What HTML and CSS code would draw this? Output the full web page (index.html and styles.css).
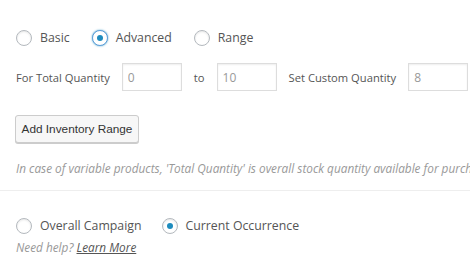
FILE: index.html
```html
<!DOCTYPE html>
<html lang="en">
<head>
<meta charset="UTF-8">
<meta name="viewport" content="width=device-width, initial-scale=1.0">
<title>Inventory Settings</title>
<link rel="stylesheet" href="styles.css">
</head>
<body>
<div class="panel">
  <div class="choices">
    <label class="choice"><span class="radio"></span> Basic</label>
    <label class="choice"><span class="radio checked focus"></span> Advanced</label>
    <label class="choice"><span class="radio"></span> Range</label>
  </div>
  <div class="range">
    <span class="field-label">For Total Quantity</span>
    <input type="text" class="qty" value="0">
    <span class="field-label">to</span>
    <input type="text" class="qty" value="10">
    <span class="field-label">Set Custom Quantity</span>
    <input type="text" class="qty" value="8">
  </div>
  <button class="button">Add Inventory Range</button>
  <p class="description">In case of variable products, 'Total Quantity' is overall stock quantity available for purchase.</p>
</div>
<div class="divider"></div>
<div class="panel">
  <div class="choices lower">
    <label class="choice"><span class="radio"></span> Overall Campaign</label>
    <label class="choice"><span class="radio checked"></span> Current Occurrence</label>
  </div>
  <p class="help">Need help? <a href="#">Learn More</a></p>
</div>
</body>
</html>
```

FILE: styles.css
```css
body {
  margin: 0;
  font-family: 'Open Sans', sans-serif;
  font-size: 12.3px;
  color: #555;
  background: #fff;
  overflow: hidden;
}

.panel {
  padding: 0 0 0 16px;
}

.choices {
  display: flex;
  align-items: center;
  height: 16px;
  margin-top: 30px;
  gap: 22px;
}

.choices.lower {
  margin-top: 27px;
  gap: 20px;
}

.choice {
  display: flex;
  align-items: center;
  gap: 8px;
  line-height: 16px;
  white-space: nowrap;
}

.radio {
  box-sizing: border-box;
  width: 16px;
  height: 16px;
  border: 1px solid #b4b9be;
  border-radius: 50%;
  background: #fff;
  box-shadow: inset 0 1px 2px rgba(0, 0, 0, 0.1);
  display: flex;
  align-items: center;
  justify-content: center;
}

.radio.checked::before {
  content: "";
  width: 6px;
  height: 6px;
  border-radius: 50%;
  background: #1e8cbe;
}

.radio.focus {
  border-color: #5b9dd9;
  box-shadow: 0 0 2px rgba(30, 140, 190, 0.8);
}

.range {
  display: flex;
  align-items: center;
  gap: 12px;
  margin-top: 17px;
  height: 28px;
}

.field-label {
  white-space: nowrap;
  flex-shrink: 0;
  font-size: 11.2px;
}

.qty {
  box-sizing: border-box;
  flex-shrink: 0;
  width: 60px;
  height: 28px;
  border: 1px solid #ddd;
  box-shadow: inset 0 1px 2px rgba(0, 0, 0, 0.07);
  padding: 0 5px;
  font-family: 'Open Sans', sans-serif;
  font-size: 12px;
  color: #999;
}

.button {
  display: block;
  margin: 24px 0 0 -1px;
  height: 28px;
  width: 124px;
  padding: 0;
  white-space: nowrap;
  font-family: 'Liberation Sans', Arial, sans-serif;
  font-size: 11.8px;
  color: #333;
  background: #f7f7f7;
  border: 1px solid #ccc;
  border-radius: 3px;
  box-shadow: 0 1px 0 #ccc;
}

.description {
  margin: 16px 0 0;
  line-height: 18px;
  font-style: italic;
  font-size: 11.8px;
  color: #999;
  white-space: nowrap;
  overflow: hidden;
}

.divider {
  margin-top: 13px;
  height: 1px;
  background: #eee;
}

.help {
  margin: 5px 0 0;
  line-height: 16px;
  font-style: italic;
  font-size: 11.8px;
  color: #999;
}

.help a {
  color: #555;
}
```
